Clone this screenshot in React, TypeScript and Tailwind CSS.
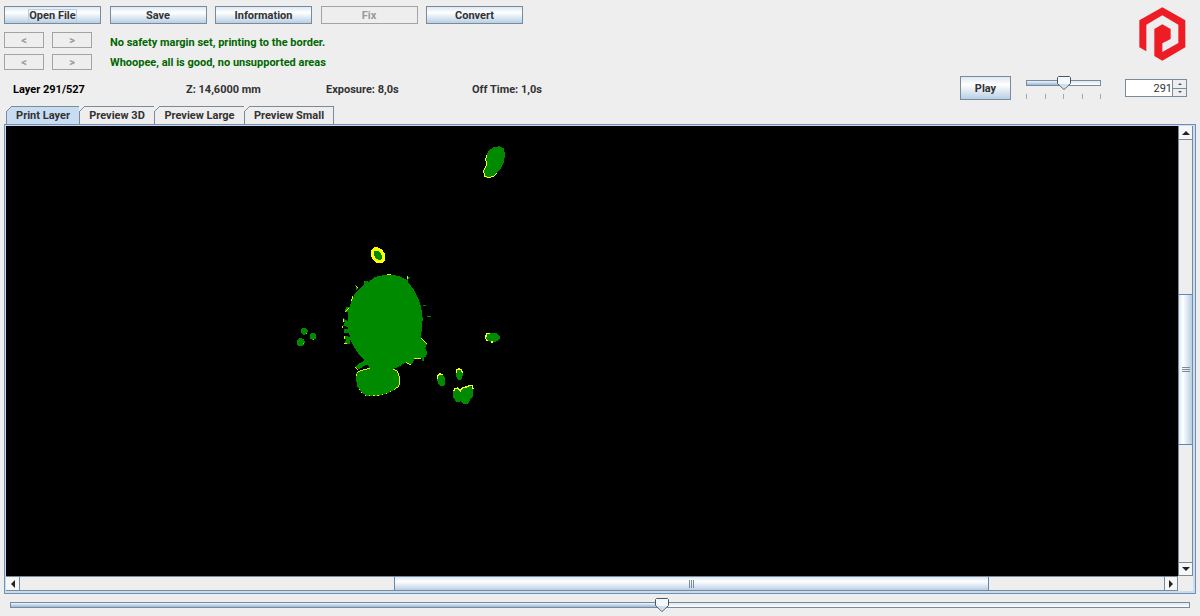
import { useState } from "react";
import type { ReactNode } from "react";

function PushButton({ children, className = "", disabled = false, focused = false, label }: {
  children: ReactNode; className?: string; disabled?: boolean; focused?: boolean; label?: string;
}) {
  const look = disabled
    ? "border-[#a3a3a3] bg-[#eeeeee] text-[#999999]"
    : "border-[#7a8a99] bg-linear-to-b from-[#dde8f3] via-white via-35% to-[#b8cfe5] text-[#333333]";
  return (
    <button type="button" disabled={disabled} aria-label={label} className={`flex items-center justify-center border pt-0.5 ${look} ${className}`}>
      <span className={focused ? "border border-[#b8cfe5] leading-3" : ""}>{children}</span>
    </button>
  );
}

function LogoMark() {
  return (
    <svg viewBox="57 22 139 162" className="mt-px mr-px h-[54px] w-[47px]" role="img" aria-label="Logo">
      <path fill="#ee1c25" d="M57 62 L126 23 L195 62 V143 L126 183 L102 169 V88 L126 74 L151 88 V118 L126 131 V157 L174 130 V75 L126 47 L78 75 V155 L57 143Z" />
    </svg>
  );
}

function Slider({ label, min, max, value, onChange }: {
  label: string; min: number; max: number; value: number; onChange: (v: number) => void;
}) {
  const pct = ((value - min) / (max - min)) * 100;
  return (
    <div className="relative h-3.5 w-full">
      <div className="absolute inset-x-0 top-1 h-1.5 border border-[#7a8a99] bg-linear-to-b from-[#dfe6ee] to-white">
        <div className="h-full bg-linear-to-b from-[#f0f6fc] to-[#98b6da]" style={{ width: `${pct}%` }} />
      </div>
      <input
        type="range" aria-label={label} min={min} max={max} value={value}
        onChange={(e) => onChange(Number(e.target.value))}
        className="absolute inset-0 h-full w-full appearance-none bg-transparent [&::-webkit-slider-thumb]:h-3.5 [&::-webkit-slider-thumb]:w-3 [&::-webkit-slider-thumb]:appearance-none [&::-webkit-slider-thumb]:bg-transparent"
      />
      <svg viewBox="0 0 14 14" className="pointer-events-none absolute top-0 h-3.5 w-3.5 -translate-x-1/2" style={{ left: `${pct}%` }}>
        <path d="M1.5 .5 H12.5 L13.5 1.5 V7.5 L7 13.5 L.5 7.5 V1.5Z" fill="#f3f8fd" stroke="#4a5663" />
        <path d="M2 8 H12 L7 12.5Z" fill="#cddff0" />
      </svg>
    </div>
  );
}

const arrows = {
  up: "M0 6 L4 2 L8 6Z",
  down: "M0 2 L4 6 L8 2Z",
  left: "M6 0 L2 4 L6 8Z",
  right: "M2 0 L6 4 L2 8Z",
};

function Arrow({ dir }: { dir: keyof typeof arrows }) {
  return <svg viewBox="0 0 8 8" className="size-2"><path d={arrows[dir]} fill="#222" /></svg>;
}

function LayerImage() {
  return (
    <svg viewBox="6 126 1172 450" width="1172" height="450" className="block max-w-none" shapeRendering="crispEdges" role="img" aria-label="Layer 291">
      <g transform="translate(330 235) scale(.3333)">
        <ellipse cx="144" cy="61" rx="15" ry="21" transform="rotate(-34 144 61)" fill="#008a00" stroke="#ffff00" strokeWidth="10" />
        <g fill="#008a00">
          <path d="M150 122 L172 120 L207 122 L228 134 L240 148 L255 170 L267 195 L274 220 L278 250 L276 280 L272 308 L290 328 L286 340 L291 350 L289 365 L276 370 L252 372 L250 382 L242 390 L228 382 L208 394 L190 402 L202 410 L209 430 L207 452 L196 464 L170 476 L140 484 L110 483 L94 472 L82 454 L78 434 L79 416 L88 408 L120 400 L114 390 L104 392 L88 402 L76 398 L84 388 L94 382 L104 376 L86 358 L72 336 L62 316 L56 290 L54 260 L55 230 L62 205 L75 175 L90 160 L102 148 L104 136 L116 140 L132 128Z" />
          <path d="M76 150 L86 158 L80 166Z M50 216 H60 V232 H46 V222Z M40 250 L54 258 V276 L38 272 L44 264Z M40 284 L56 280 V294 H44Z M42 302 L60 306 V326 H42 L48 314Z M230 122 L240 128 L232 138Z" />
          <path d="M278 209 H288 V212 H278Z M292 242 H302 V246 H292Z M276 370 H282 V378 H276Z M258 296 L274 306 L270 320Z" />
        </g>
        <g stroke="#e8f000" strokeWidth="3" fill="none">
          <path d="M170 119 H184 M234 122 V132 M76 152 L82 158 M68 184 L64 198 M56 220 L46 230 M40 252 V260 M38 274 V280 M43 304 V312 M42 326 H50 M272 308 L292 328 M252 372 L272 370 M228 382 L244 391 M76 396 L84 404" />
          <path d="M120 400 L90 407 L80 416 L78 424 M190 402 L203 409 L209 430 L207 452 L192 466" />
          <path d="M184 470 L150 482 L110 483 L96 474 L82 454" strokeDasharray="5 8" />
        </g>
      </g>
      <g transform="translate(420 320) scale(.3333)">
        <g fill="#008a00">
          <ellipse cx="218" cy="52" rx="22" ry="14" />
          <ellipse cx="64" cy="180" rx="12" ry="19" transform="rotate(-12 64 180)" />
          <ellipse cx="118" cy="163" rx="10" ry="18" />
          <path d="M100 212 L108 204 L118 208 L122 214 L132 200 L152 196 L159 206 L159 228 L150 240 L144 252 L130 252 L122 244 L110 246 L100 234Z" />
        </g>
        <g fill="none" stroke="#ffff20" strokeWidth="4">
          <path d="M210 40 L200 42 L196 54 L202 63 M213 66 H220" />
          <path d="M53 178 V168 L60 161 L68 165 M109 160 V150 L116 146 L124 149 L127 158" />
          <path d="M101 214 L106 205 L114 204 L121 213 L128 202 L140 201 L148 196 L157 197 L159 206" />
        </g>
      </g>
      <g transform="translate(470 135) scale(.3333)">
        <path d="M48 62 L56 48 L68 38 L88 34 L102 40 L105 58 L102 80 L90 104 L72 122 L58 130 L44 126 L40 110 L49 92 L46 76Z" fill="#008a00" />
        <path d="M50 60 L47 72 L50 90 L41 106 L43 123 L56 129 L70 124 L80 115" fill="none" stroke="#f4ff30" strokeWidth="3" />
      </g>
      <g transform="translate(285 320) scale(.3333)">
        <g fill="#008a00">
          <circle cx="58" cy="34" r="10" /><circle cx="84" cy="49" r="10" /><circle cx="47" cy="67" r="12" />
        </g>
        <path d="M64 40 H67 V43 H64Z M84 56 H87 V59 H84Z M55 70 H58 V73 H55Z" fill="#a8c800" />
      </g>
    </svg>
  );
}

const tabs = ["Print Layer", "Preview 3D", "Preview Large", "Preview Small"];
const tabWidths = ["w-[74px]", "w-[75px]", "w-[90px]", "w-[89px]"];

export default function App() {
  const [layer, setLayer] = useState(291);
  const [speed, setSpeed] = useState(50);
  const [tab, setTab] = useState(0);
  return (
    <div className="flex h-screen flex-col bg-[#eeeeee] font-[Roboto,'Liberation_Sans',Arial,sans-serif] text-[11px] leading-4 font-bold text-[#333333]">
      <header className="flex shrink-0 justify-between pt-1.5 pr-[13px] pl-1">
        <div>
          <div className="flex w-[519px] justify-between">
            <PushButton focused className="h-[18px] w-[97px]">Open File</PushButton>
            <PushButton className="h-[18px] w-[97px]">Save</PushButton>
            <PushButton className="h-[18px] w-[97px]">Information</PushButton>
            <PushButton disabled className="h-[18px] w-[97px]">Fix</PushButton>
            <PushButton className="h-[18px] w-[97px]">Convert</PushButton>
          </div>
          <div className="mt-2 flex items-start gap-[18px]">
            <div className="grid grid-cols-[40px_40px] gap-x-2 gap-y-1.5">
              <PushButton disabled label="Previous margin issue" className="h-4">&lt;</PushButton>
              <PushButton disabled label="Next margin issue" className="h-4">&gt;</PushButton>
              <PushButton disabled label="Previous island" className="h-4">&lt;</PushButton>
              <PushButton disabled label="Next island" className="h-4">&gt;</PushButton>
            </div>
            <div className="pt-px leading-5 text-[#006600]">
              <p>No safety margin set, printing to the border.</p>
              <p>Whoopee, all is good, no unsupported areas</p>
            </div>
          </div>
          <div className="grid h-[33px] grid-cols-[173px_140px_146px_auto] items-center pl-[9px]">
            <span className="text-black">Layer {layer}/527</span>
            <span>Z: 14,6000 mm</span>
            <span>Exposure: 8,0s</span>
            <span>Off Time: 1,0s</span>
          </div>
        </div>
        <div className="flex flex-col items-end justify-between pb-1.5">
          <LogoMark />
          <div className="flex items-start">
            <PushButton className="h-6 w-[51px]">Play</PushButton>
            <div className="ml-[15px] w-[75px]">
              <Slider label="Playback speed" min={0} max={100} value={speed} onChange={setSpeed} />
              <div className="mt-1 flex justify-between">
                {[0, 1, 2, 3, 4].map((t) => <span key={t} className="h-[5px] w-px bg-[#a0a8b0]" />)}
              </div>
            </div>
            <div className="mt-[3px] ml-6 flex h-[18px] w-[62px]">
              <input
                type="number" aria-label="Layer number" min={0} max={527} value={layer}
                onChange={(e) => setLayer(Number(e.target.value))}
                className="w-12 appearance-none border border-[#7a8a99] bg-white pt-0.5 text-right font-normal [&::-webkit-inner-spin-button]:appearance-none"
              />
              <div className="flex flex-1 flex-col">
                <button type="button" aria-label="Next layer" onClick={() => setLayer(Math.min(527, layer + 1))} className="flex flex-1 items-center justify-center border border-l-0 border-[#7a8a99]">
                  <svg viewBox="0 0 4 2" className="h-0.5 w-1"><path d="M0 2 L2 0 L4 2Z" fill="#4a5663" /></svg>
                </button>
                <button type="button" aria-label="Previous layer" onClick={() => setLayer(Math.max(0, layer - 1))} className="flex flex-1 items-center justify-center border border-t-0 border-l-0 border-[#7a8a99]">
                  <svg viewBox="0 0 4 2" className="h-0.5 w-1"><path d="M0 0 L2 2 L4 0Z" fill="#4a5663" /></svg>
                </button>
              </div>
            </div>
          </div>
        </div>
      </header>

      <div role="tablist" className="flex shrink-0 pl-1.5">
        {tabs.map((name, i) => (
          <button
            key={name} type="button" role="tab" aria-selected={i === tab} onClick={() => setTab(i)}
            className={`relative h-[18px] border-t border-r border-[#7a8a99] ${i === 0 ? "border-l" : ""} ${i === tab ? "bg-[#c8ddf2]" : "bg-[#eeeeee]"} ${tabWidths[i]}`}
          >
            <svg viewBox="0 0 6 6" className="absolute -top-px -left-px size-1.5">
              <path d="M0 0 H6 L0 6Z" fill="#eeeeee" /><path d="M0 6 L6 0" stroke="#7a8a99" />
            </svg>
            {name}
          </button>
        ))}
      </div>

      <main className="mr-1 ml-1 flex min-h-0 flex-1 flex-col border border-[#6f8fb3] bg-[#c8ddf2] pt-px pr-0.5 pb-0.5 pl-px">
        <div className="grid min-h-0 flex-1 grid-cols-[minmax(0,1fr)_15px] grid-rows-[minmax(0,1fr)_15px] bg-[#eeeeee]">
          <div className="overflow-hidden bg-black"><LayerImage /></div>
          <div className="flex flex-col border-x border-[#7a8a99]">
            <button type="button" aria-label="Scroll up" className="flex h-3.5 items-center justify-center border-b border-[#7a8a99] bg-[#f6f6f6]"><Arrow dir="up" /></button>
            <div className="grow-[155] basis-0" />
            <div className="flex grow-[150] basis-0 flex-col items-center justify-center gap-px border-y border-[#6382bf] bg-linear-to-r from-[#dbe8f5] via-white via-30% to-[#b8cfe5]">
              <span className="h-px w-2 bg-[#7a8a99]" /><span className="h-px w-2 bg-[#7a8a99]" /><span className="h-px w-2 bg-[#7a8a99]" />
            </div>
            <div className="grow-[118] basis-0" />
            <button type="button" aria-label="Scroll down" className="flex h-3.5 items-center justify-center border-y border-[#7a8a99] bg-[#f6f6f6]"><Arrow dir="down" /></button>
          </div>
          <div className="flex border-y border-[#7a8a99]">
            <button type="button" aria-label="Scroll left" className="flex w-3.5 items-center justify-center border-r border-[#7a8a99] bg-[#f6f6f6]"><Arrow dir="left" /></button>
            <div className="grow-[375] basis-0" />
            <div className="flex grow-[595] basis-0 items-center justify-center gap-px border-x border-[#6382bf] bg-linear-to-b from-[#dbe8f5] via-white via-35% to-[#b8cfe5]">
              <span className="h-2 w-px bg-[#7a8a99]" /><span className="h-2 w-px bg-[#7a8a99]" /><span className="h-2 w-px bg-[#7a8a99]" />
            </div>
            <div className="grow-[175] basis-0" />
            <button type="button" aria-label="Scroll right" className="flex w-3.5 items-center justify-center border-x border-[#7a8a99] bg-[#f6f6f6]"><Arrow dir="right" /></button>
          </div>
        </div>
      </main>

      <footer className="shrink-0 px-2.5 pt-1 pb-1">
        <Slider label="Layer" min={0} max={527} value={layer} onChange={setLayer} />
      </footer>
    </div>
  );
}
